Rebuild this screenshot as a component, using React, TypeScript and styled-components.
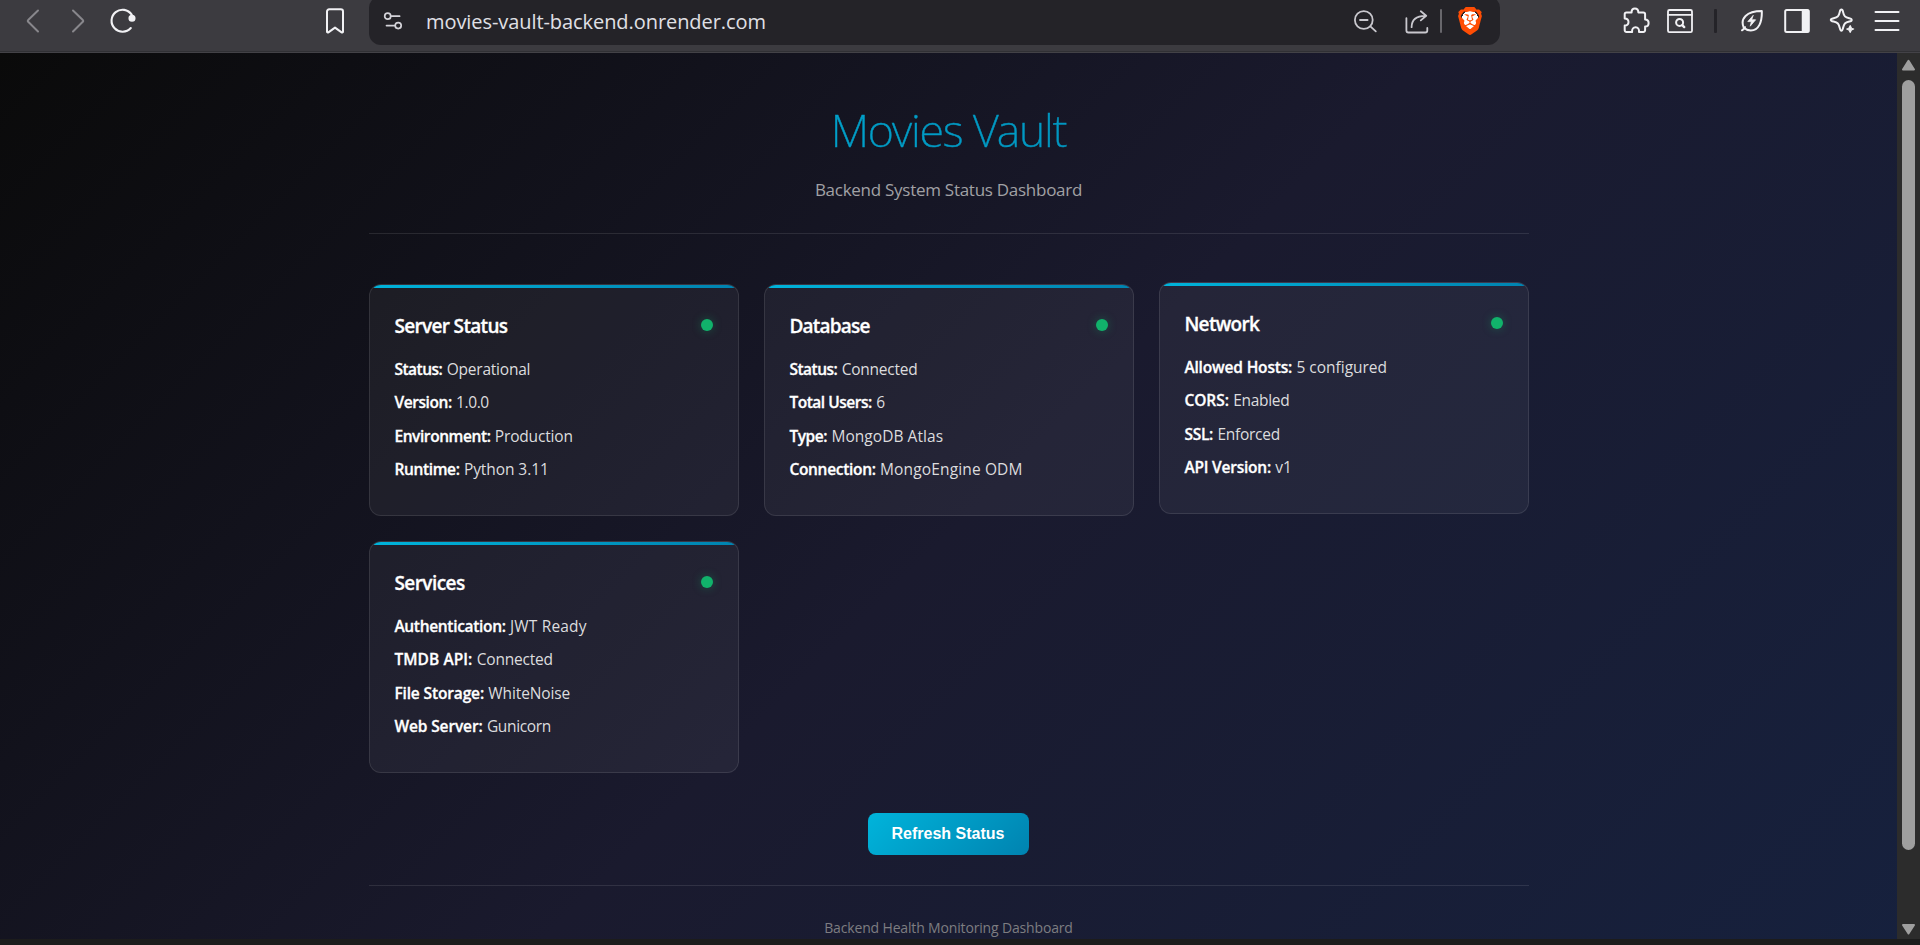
import React from 'react';
import styled, { createGlobalStyle } from 'styled-components';
import { SiBrave } from 'react-icons/si';

const GlobalStyle = createGlobalStyle`
  *, *::before, *::after { box-sizing: border-box; }
  body {
    margin: 0;
    overflow: hidden;
    background: #1c1c1c;
    font-family: 'Open Sans', 'Noto Sans', sans-serif;
  }
`;

const Window = styled.div`
  display: flex;
  flex-direction: column;
  width: 1920px;
  height: 945px;
  overflow: hidden;
  padding-bottom: 6px;
  background: #1c1c1c;
`;

/* Browser chrome */

const Toolbar = styled.header`
  display: flex;
  align-items: flex-start;
  flex: none;
  height: 53px;
  padding: 0 20px 0 26px;
  overflow: hidden;
  background: linear-gradient(#3c3b40 0 51px, #303034 51px 52px, #434247 52px);
`;

const ToolbarGroup = styled.div<{ $before?: number }>`
  display: flex;
  align-items: flex-start;
  margin-left: ${p => p.$before ?? 0}px;
`;

const Glyph = styled.svg<{ $before?: number; $tone?: string; $weight?: number }>`
  display: block;
  flex: none;
  height: 42px;
  margin-left: ${p => p.$before ?? 0}px;
  fill: none;
  stroke: ${p => p.$tone ?? '#f1f1f4'};
  stroke-width: ${p => p.$weight ?? 2};
  stroke-linecap: round;
  stroke-linejoin: round;
`;

const AddressBar = styled.div`
  display: flex;
  align-items: flex-start;
  width: 1131px;
  height: 49px;
  margin: -4px 0 0 24px;
  padding: 4px 17px 0 14px;
  border-radius: 12px;
  background: #242328;
`;

const Url = styled.span`
  flex: 1;
  margin-left: 23px;
  font-size: 20px;
  line-height: 44px;
  letter-spacing: -0.07px;
  color: #e0e0e6;
`;

const Divider = styled.span<{ $before: number; $width: number; $tone: string }>`
  width: ${p => p.$width}px;
  height: 24px;
  margin: 9px 0 0 ${p => p.$before}px;
  border-radius: 1px;
  background: ${p => p.$tone};
`;

const BraveBadge = styled.span`
  display: flex;
  justify-content: center;
  width: 26px;
  height: 28px;
  margin: 7px 0 0 15px;
  background: radial-gradient(ellipse 8.5px 9px at 50% 46%, #fff 99%, transparent 100%);

  svg {
    width: 28px;
    height: 28px;
    flex: none;
    color: #ff4d04;
  }
`;

/* Viewport */

const Viewport = styled.div`
  display: flex;
  flex: 1;
  min-height: 0;
`;

const Page = styled.main`
  flex: 1;
  height: 886px;
  padding: 0 0 0 1px;
  overflow: hidden;
  background: linear-gradient(135deg, #0a0a0a 0%, #1a1a2e 50%, #16213e 100%) 0 0 / 100% 965px no-repeat;
`;

const Container = styled.div`
  width: 1160px;
  margin: 0 auto;
`;

const Scrollbar = styled.aside`
  display: flex;
  flex-direction: column;
  align-items: center;
  width: 23px;
  padding: 6px 0 4px;
  background: #2c2c2c;
`;

const Arrow = styled.svg`
  display: block;
  width: 15px;
  height: 12px;
  fill: #9f9f9f;
  stroke: #9f9f9f;
  stroke-width: 2;
  stroke-linejoin: round;
`;

const Thumb = styled.div`
  width: 13px;
  height: 770px;
  margin: 9px 0 auto;
  border-radius: 7px;
  background: #9f9f9f;
`;

/* Dashboard */

const Header = styled.div`
  padding: 47px 0 31px;
  border-bottom: 1px solid rgba(255, 255, 255, 0.1);
  text-align: center;
`;

const Title = styled.h1`
  margin: 0 0 18px;
  padding-right: 1px;
  font: 200 45px/60px 'Noto Sans', 'Open Sans', sans-serif;
  letter-spacing: -1.15px;
  background: linear-gradient(135deg, #00b4db, #0083b0);
  -webkit-background-clip: text;
  background-clip: text;
  -webkit-text-stroke: 0.5px transparent;
  color: transparent;
`;

const Subtitle = styled.p`
  margin: 0;
  padding-right: 1px;
  font-size: 17px;
  line-height: 24px;
  letter-spacing: -0.27px;
  color: #a1a1a5;
`;

const Grid = styled.section`
  display: grid;
  grid-template-columns: repeat(3, 370px);
  grid-auto-rows: 232px;
  gap: 25px;
  margin: 50px 0 40px;
`;

const Card = styled.article<{ $raised?: boolean }>`
  position: relative;
  overflow: hidden;
  padding: 25px 25px 25px 24.4px;
  border: 1px solid rgba(255, 255, 255, 0.1);
  border-radius: 12px;
  background: rgba(255, 255, 255, 0.05);
  transform: ${p => (p.$raised ? 'translateY(-2px)' : 'none')};

  &::before {
    content: '';
    position: absolute;
    inset: 0 0 auto;
    height: 3px;
    background: linear-gradient(90deg, #00b4db, #0083b0);
  }
`;

const CardHead = styled.div`
  display: flex;
  justify-content: space-between;
  align-items: flex-start;
  margin-bottom: 14px;
`;

const CardTitle = styled.h2<{ $tracking: number }>`
  margin: 0;
  font-size: 19px;
  font-weight: 600;
  line-height: 33px;
  letter-spacing: ${p => p.$tracking}px;
  -webkit-text-stroke: 0.3px #fff;
  color: #fff;
`;

const Dot = styled.span`
  width: 12px;
  height: 12px;
  margin-top: 9px;
  border-radius: 50%;
  background: #11b26b;
  box-shadow: 0 0 10px rgba(17, 178, 107, 0.35);
`;

const Rows = styled.div`
  display: flex;
  flex-direction: column;
  gap: 8.4px;
`;

const Row = styled.p`
  margin: 0;
  font-size: 15.5px;
  line-height: 25px;
  white-space: nowrap;
  color: #dcdcde;
`;

const Label = styled.strong<{ $tracking: number }>`
  font-weight: 600;
  letter-spacing: ${p => p.$tracking}px;
  -webkit-text-stroke: 0.3px #fff;
  color: #fff;
`;

const Value = styled.span<{ $tracking: number }>`
  margin-left: 0.3px;
  letter-spacing: ${p => p.$tracking}px;
`;

const Actions = styled.div`
  display: flex;
  justify-content: center;
  margin-bottom: 30px;
  padding-right: 2px;
`;

const RefreshButton = styled.button`
  width: 161px;
  height: 42px;
  padding: 0;
  border: 0;
  border-radius: 8px;
  background: linear-gradient(135deg, #00b4db, #0083b0);
  color: #fff;
  font: 600 16px 'Liberation Sans', Arial, sans-serif;
`;

const Footer = styled.footer`
  padding: 32px 1px 0 0;
  border-top: 1px solid rgba(255, 255, 255, 0.1);
  text-align: center;
  font-size: 14px;
  line-height: 20px;
  letter-spacing: -0.16px;
  color: #7d7d81;
`;

type Field = { label: string; lt: number; value: string; vt: number };
type CardData = { title: string; tracking: number; raised?: boolean; fields: Field[] };

const cards: CardData[] = [
  {
    title: 'Server Status',
    tracking: -0.66,
    fields: [
      { label: 'Status:', lt: -0.5, value: 'Operational', vt: -0.21 },
      { label: 'Version:', lt: -0.42, value: '1.0.0', vt: -0.39 },
      { label: 'Environment:', lt: -0.41, value: 'Production', vt: -0.18 },
      { label: 'Runtime:', lt: -0.35, value: 'Python 3.11', vt: -0.08 },
    ],
  },
  {
    title: 'Database',
    tracking: -0.78,
    fields: [
      { label: 'Status:', lt: -0.5, value: 'Connected', vt: -0.22 },
      { label: 'Total Users:', lt: -0.48, value: '6', vt: 0 },
      { label: 'Type:', lt: -0.44, value: 'MongoDB Atlas', vt: 0.05 },
      { label: 'Connection:', lt: -0.3, value: 'MongoEngine ODM', vt: 0.14 },
    ],
  },
  {
    title: 'Network',
    tracking: -0.67,
    raised: true,
    fields: [
      { label: 'Allowed Hosts:', lt: -0.17, value: '5 configured', vt: -0.02 },
      { label: 'CORS:', lt: -0.04, value: 'Enabled', vt: -0.31 },
      { label: 'SSL:', lt: -0.26, value: 'Enforced', vt: -0.26 },
      { label: 'API Version:', lt: -0.22, value: 'v1', vt: 0 },
    ],
  },
  {
    title: 'Services',
    tracking: -0.56,
    fields: [
      { label: 'Authentication:', lt: -0.32, value: 'JWT Ready', vt: 0.18 },
      { label: 'TMDB API:', lt: 0.07, value: 'Connected', vt: -0.22 },
      { label: 'File Storage:', lt: -0.14, value: 'WhiteNoise', vt: -0.11 },
      { label: 'Web Server:', lt: -0.12, value: 'Gunicorn', vt: -0.36 },
    ],
  },
];

function BrowserToolbar() {
  return (
    <Toolbar>
      <Glyph width={14} viewBox="0 0 14 42" $tone="#88878c">
        <path d="M12 10.5 2.2 20a1.2 1.2 0 0 0 0 1.8l9.8 9.7" />
      </Glyph>
      <Glyph width={14} viewBox="0 0 14 42" $before={31} $tone="#88878c">
        <path d="M2 10.5 11.8 20a1.2 1.2 0 0 1 0 1.8L2 31.5" />
      </Glyph>
      <Glyph width={26} viewBox="0 0 26 42" $before={25} $weight={2.1}>
        <path d="M21.7 14.6A11 11 0 1 0 20.8 28" />
        <circle cx="22" cy="18.3" r="2.5" fill="#f1f1f4" />
      </Glyph>
      <Glyph width={20} viewBox="0 0 20 42" $before={189}>
        <path d="M4.2 9.3h11.6a2.2 2.2 0 0 1 2.2 2.2v20.2c0 .7-.8 1.1-1.4.7L10 27.6l-6.6 4.8c-.6.4-1.4 0-1.4-.7V11.5a2.2 2.2 0 0 1 2.2-2.2Z" />
      </Glyph>
      <AddressBar>
        <Glyph width={20} viewBox="0 0 20 42" $tone="#d4d3d9" $weight={1.7}>
          <circle cx="4.7" cy="16.2" r="3" />
          <path d="M8.2 16.2h8.4M3.5 25.6h8.2" />
          <circle cx="15.2" cy="25.6" r="3" />
        </Glyph>
        <Url>movies-vault-backend.onrender.com</Url>
        <Glyph width={24} viewBox="0 0 24 42" $tone="#c9c8ce" $weight={1.8}>
          <circle cx="9.8" cy="20" r="8.9" />
          <path d="m16.4 26.3 5.4 5.1M6 20h7.6" />
        </Glyph>
        <Glyph width={24} viewBox="0 0 24 42" $before={27} $tone="#c9c8ce" $weight={1.8}>
          <path d="M1.4 18.2v12.3a2 2 0 0 0 2 2h16.9a2 2 0 0 0 2-2v-2.6" />
          <path d="M6.6 27.2c0-7.5 4.3-11.4 13.8-11.4M15.8 11.3l5.4 4.5-5.4 4.6" />
        </Glyph>
        <Divider $before={11} $width={2} $tone="#68676c" />
        <BraveBadge>
          <SiBrave />
        </BraveBadge>
      </AddressBar>
      <ToolbarGroup $before={122}>
        <Glyph width={28} viewBox="0 0 28 42">
          <path d="M4.5 12.4h5.1c-.1-2.6 1.1-3.9 3.3-3.9s3.5 1.3 3.4 3.9h5a1.8 1.8 0 0 1 1.8 1.8v5.2c2.4 0 3.5 1.4 3.5 3.6s-1.1 3.6-3.5 3.6v3.7a1.8 1.8 0 0 1-1.8 1.8h-4.3c.4-3.2-1.1-4.8-3.4-4.8s-3.9 1.6-3.5 4.8H4.5a1.8 1.8 0 0 1-1.8-1.8v-4.7c2.6-.1 3.8-1.5 3.8-3.6s-1.2-3.5-3.8-3.6v-4.2a1.8 1.8 0 0 1 1.8-1.8Z" />
        </Glyph>
        <Glyph width={28} viewBox="0 0 28 42" $before={16} $weight={1.8}>
          <rect x="2" y="10" width="24" height="22.2" rx="1.5" />
          <path d="M2 14.8h24" />
          <circle cx="13.6" cy="22.4" r="3.5" strokeWidth="2" />
          <path d="m16.3 25.2 1.9 1.9" strokeWidth="2.4" />
        </Glyph>
        <Divider $before={20} $width={3} $tone="#242328" />
        <Glyph width={24} viewBox="0 0 24 42" $before={23}>
          <path d="M2 30.3c1.4-.8 2.4-1.9 3-3.1M3.8 27.8C-.2 18.5 6.5 11 21.8 11c.4 11-3 19.5-11 19.5-3 0-5.2-1-7-2.7Z" />
          <path d="m13 15.6-5.2 6h3.6l-1.2 4.6 5.4-6.4h-3.7Z" fill="#f1f1f4" strokeWidth=".8" />
        </Glyph>
        <Glyph width={26} viewBox="0 0 26 42" $before={20}>
          <rect x="1.2" y="10" width="23.6" height="22" rx="1.5" />
          <path d="M18.5 10.5h5.8v21h-5.8Z" fill="#f1f1f4" strokeWidth="1.5" />
        </Glyph>
        <Glyph width={28} viewBox="0 0 28 42" $before={18}>
          <path d="M13.4 9.6c1 0 1.3.7 1.7 2.5.9 4.2 1.9 5.2 6.1 6.1 1.8.4 2.5.7 2.5 1.7s-.7 1.3-2.5 1.7c-4.2.9-5.2 2-6.1 6.2-.4 1.8-.7 2.9-1.7 2.9s-1.3-1.1-1.7-2.9c-.9-4.2-1.9-5.3-6.1-6.2-1.8-.4-2.8-.7-2.8-1.7s1-1.3 2.8-1.7c4.2-.9 5.2-1.9 6.1-6.1.4-1.8.7-2.5 1.7-2.5Z" />
          <path d="M22.2 25.5c.5 2.4 1.1 3 3.5 3.5-2.4.5-3 1.1-3.5 3.5-.5-2.4-1.1-3-3.5-3.5 2.4-.5 3-1.1 3.5-3.5Z" fill="#f1f1f4" strokeWidth="1.2" />
        </Glyph>
        <Glyph width={26} viewBox="0 0 26 42" $before={18}>
          <path d="M1.5 12h23M1.5 21h23M1.5 30h23" />
        </Glyph>
      </ToolbarGroup>
    </Toolbar>
  );
}

export default function App() {
  return (
    <Window>
      <GlobalStyle />
      <BrowserToolbar />
      <Viewport>
        <Page>
          <Container>
            <Header>
              <Title>Movies Vault</Title>
              <Subtitle>Backend System Status Dashboard</Subtitle>
            </Header>
            <Grid>
              {cards.map(card => (
                <Card key={card.title} $raised={card.raised}>
                  <CardHead>
                    <CardTitle $tracking={card.tracking}>{card.title}</CardTitle>
                    <Dot />
                  </CardHead>
                  <Rows>
                    {card.fields.map(f => (
                      <Row key={f.label}>
                        <Label $tracking={f.lt}>{f.label}</Label>{' '}
                        <Value $tracking={f.vt}>{f.value}</Value>
                      </Row>
                    ))}
                  </Rows>
                </Card>
              ))}
            </Grid>
            <Actions>
              <RefreshButton>Refresh Status</RefreshButton>
            </Actions>
            <Footer>Backend Health Monitoring Dashboard</Footer>
          </Container>
        </Page>
        <Scrollbar>
          <Arrow viewBox="0 0 15 12">
            <path d="M7.5 1.8 13 10.5H2Z" />
          </Arrow>
          <Thumb />
          <Arrow viewBox="0 0 15 12">
            <path d="M7.5 10.5 2 2h11Z" />
          </Arrow>
        </Scrollbar>
      </Viewport>
    </Window>
  );
}
